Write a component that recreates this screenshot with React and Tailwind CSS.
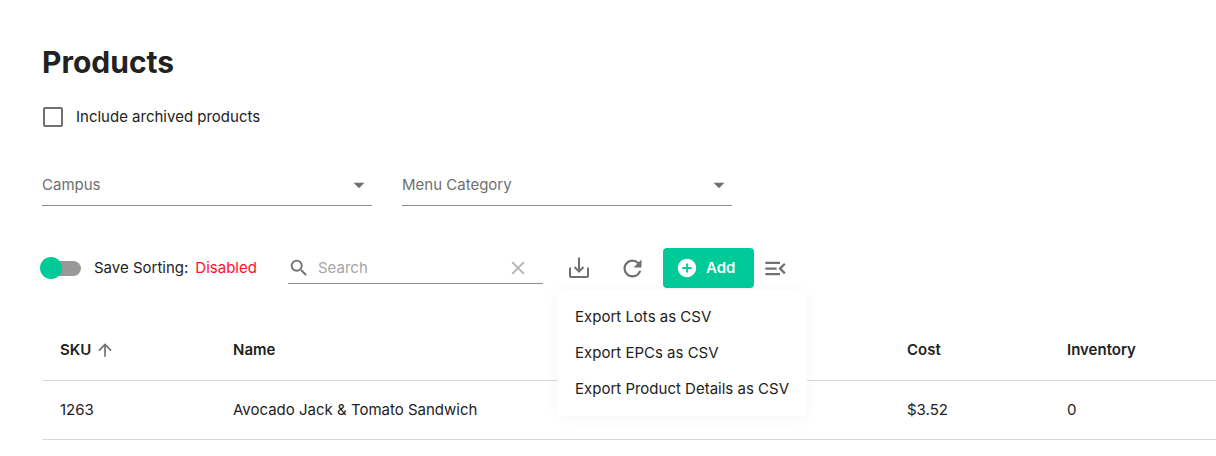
import { useState } from "react";
import {
  MdAddCircle,
  MdArrowDropDown,
  MdArrowUpward,
  MdClear,
  MdMenuOpen,
  MdRefresh,
  MdSearch,
} from "react-icons/md";

const exportOptions = [
  "Export Lots as CSV",
  "Export EPCs as CSV",
  "Export Product Details as CSV",
];

const products = [
  { sku: "1263", name: "Avocado Jack & Tomato Sandwich", cost: "$3.52", inventory: "0" },
];

const DownloadIcon = () => (
  <svg viewBox="0 0 24 24" className="size-6" fill="none" stroke="currentColor" strokeWidth="2">
    <path d="M3 11.5V20a1 1 0 0 0 1 1h16a1 1 0 0 0 1-1v-8.500" />
    <path d="M12 1.500v13.500M7.500 11l4.500 4.500 4.500-4.500" />
  </svg>
);

const FilterSelect = ({ id, label }) => (
  <div className="grid w-[330px] items-center border-b border-[#8c8c8c]">
    <select
      id={id}
      aria-label={label}
      defaultValue=""
      className="col-start-1 row-start-1 h-10 w-full appearance-none bg-transparent text-[#6f6f6f] outline-none"
    >
      <option value="">{label}</option>
    </select>
    <MdArrowDropDown className="pointer-events-none col-start-1 row-start-1 size-[26px] justify-self-end text-[#707070]" />
  </div>
);

const ExportMenu = () => (
  <ul
    role="menu"
    className="absolute top-[42px] left-[-10px] z-10 w-[250px] rounded bg-white py-[9px] shadow-[0_2px_16px_rgba(0,0,0,0.04)]"
  >
    {exportOptions.map((option) => (
      <li key={option} role="none">
        <button role="menuitem" className="h-9 w-full px-[18px] text-left whitespace-nowrap">
          {option}
        </button>
      </li>
    ))}
  </ul>
);

const Toolbar = () => {
  const [search, setSearch] = useState("");
  const [saveSorting, setSaveSorting] = useState(false);
  const [menuOpen, setMenuOpen] = useState(true);

  return (
    <div className="mt-[42px] flex h-10 items-center">
      <label className="-ml-0.5 flex w-[248px] shrink-0 items-center">
        <input
          type="checkbox"
          role="switch"
          checked={saveSorting}
          onChange={(e) => setSaveSorting(e.target.checked)}
          className="ml-1.5 flex h-[15px] w-[35px] appearance-none items-center rounded-full bg-[#999999] before:-ml-1.5 before:size-[22px] before:shrink-0 before:rounded-full before:bg-[#00ca98] before:shadow-[0_2px_8px_rgba(0,0,0,0.04)] checked:before:ml-[19px]"
        />
        <span className="ml-[13px]">Save Sorting:</span>
        <span className="ml-[7px] text-[#ff1029]">{saveSorting ? "Enabled" : "Disabled"}</span>
      </label>

      <div className="mb-1 flex h-8 w-[255px] shrink-0 items-center self-end border-b border-[#8c8c8c]">
        <MdSearch className="size-[22px] text-[#707070]" />
        <input
          type="text"
          aria-label="Search"
          placeholder="Search"
          value={search}
          onChange={(e) => setSearch(e.target.value)}
          className="ml-2 min-w-0 flex-1 bg-transparent outline-none placeholder:text-[#a5a5a5]"
        />
        <button aria-label="Clear search" onClick={() => setSearch("")} className="mr-3.5">
          <MdClear className="size-[22px] text-[#b5b5b5]" />
        </button>
      </div>

      <div className="relative ml-6 flex h-10 items-center text-[#707070]">
        <button
          aria-label="Export"
          aria-haspopup="menu"
          aria-expanded={menuOpen}
          onClick={() => setMenuOpen(!menuOpen)}
        >
          <DownloadIcon />
        </button>
        {menuOpen && (
          <div className="text-[#222222]">
            <ExportMenu />
          </div>
        )}
      </div>
      <button aria-label="Refresh" className="ml-7 text-[#707070]">
        <MdRefresh className="size-[27px]" />
      </button>
      <button className="ml-[17px] flex h-10 w-[91px] items-center rounded bg-[#00ca98] pl-[13px] font-semibold text-white shadow-[0_2px_12px_rgba(0,0,0,0.04)]">
        <MdAddCircle className="size-[22px]" />
        <span className="ml-2">Add</span>
      </button>
      <button aria-label="Columns" className="ml-2 text-[#707070]">
        <MdMenuOpen className="size-[27px]" />
      </button>
    </div>
  );
};

const ProductsTable = () => (
  <table className="mt-8 w-full table-fixed border-separate border-spacing-0 text-left">
    <thead>
      <tr className="h-[61px] *:border-b *:border-[#d9d9d9] *:pl-[18px] *:font-semibold">
        <th className="w-[173px]" aria-sort="ascending">
          <button className="flex items-center gap-1">
            SKU
            <MdArrowUpward className="size-5 text-[#707070]" />
          </button>
        </th>
        <th>Name</th>
        <th className="w-40">Cost</th>
        <th className="w-[167px]">Inventory</th>
      </tr>
    </thead>
    <tbody>
      {products.map((product) => (
        <tr key={product.sku} className="h-[59px] *:border-b *:border-[#d9d9d9] *:pl-[18px]">
          <td>{product.sku}</td>
          <td>{product.name}</td>
          <td>{product.cost}</td>
          <td>{product.inventory}</td>
        </tr>
      ))}
    </tbody>
  </table>
);

export default function App() {
  return (
    <main className="bg-white pt-[42px] pl-[42px] font-['Inter',sans-serif] text-[15px] leading-6 text-[#222222]">
      <h1 className="text-[30px] leading-10 font-bold">Products</h1>

      <label className="mt-[23px] flex h-6 items-center">
        <input
          type="checkbox"
          className="ml-px size-5 appearance-none rounded-xs border-2 border-[#707070] checked:bg-[#00ca98]"
        />
        <span className="ml-[13px]">Include archived products</span>
      </label>

      <div className="mt-9 flex gap-[30px]">
        <FilterSelect id="campus" label="Campus" />
        <FilterSelect id="menu-category" label="Menu Category" />
      </div>

      <Toolbar />
      <ProductsTable />
    </main>
  );
}
